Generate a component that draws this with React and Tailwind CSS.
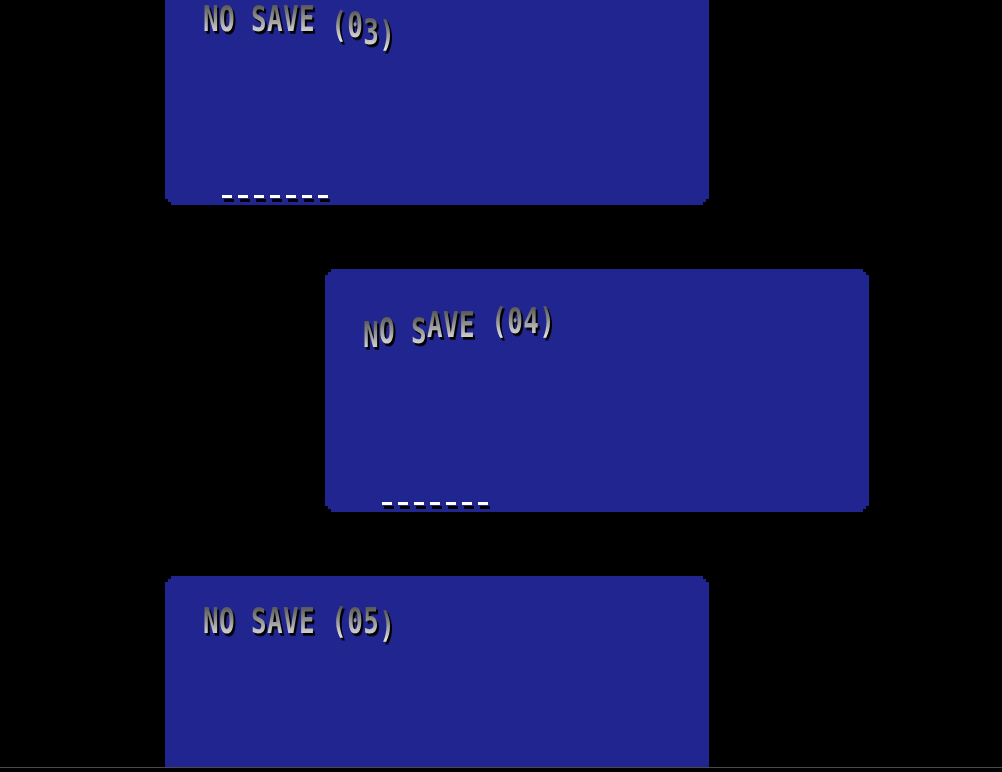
const CORNERS =
  "[clip-path:polygon(6px_0,calc(100%-6px)_0,calc(100%-6px)_3px,calc(100%-3px)_3px,calc(100%-3px)_6px,100%_6px,100%_calc(100%-6px),calc(100%-3px)_calc(100%-6px),calc(100%-3px)_calc(100%-3px),calc(100%-6px)_calc(100%-3px),calc(100%-6px)_100%,6px_100%,6px_calc(100%-3px),3px_calc(100%-3px),3px_calc(100%-6px),0_calc(100%-6px),0_6px,3px_6px,3px_3px,6px_3px)]";

const slots = [
  {
    label: "NO SAVE (03)",
    indent: "ml-[165px]",
    top: "pt-[39px]",
    wave: ["", "", "", "", "", "", "", "", "translate-y-[4px]", "translate-y-[4px]", "translate-y-[9px]", "translate-y-[11px]"],
  },
  {
    label: "NO SAVE (04)",
    indent: "ml-[325px]",
    top: "pt-[34px]",
    wave: ["translate-y-[10px]", "translate-y-[7px]", "", "translate-y-[7px]", "translate-y-[3px]", "translate-y-[3px]", "translate-y-[3px]", "", "", "", "", ""],
  },
  {
    label: "NO SAVE (05)",
    indent: "ml-[165px]",
    top: "pt-[27px]",
    wave: ["", "", "", "", "", "", "", "", "", "", "", "translate-y-[3px]"],
  },
];

function Label({ text, wave }) {
  return (
    <div className="flex origin-top scale-y-[1.35] py-[2px] font-['DejaVu_Sans_Mono',monospace] text-[26px] font-bold leading-none tracking-[0.35px]">
      {text.split("").map((ch, i) => (
        <span
          key={i}
          className={`inline-block bg-gradient-to-b from-[#4a4a4a] to-[#ececec] bg-clip-text text-transparent [filter:drop-shadow(2px_2px_0_#000)] ${wave[i]}`}
        >
          {ch === " " ? "\u00a0" : ch}
        </span>
      ))}
    </div>
  );
}

function SaveSlot({ slot }) {
  return (
    <div
      className={`${slot.indent} ${slot.top} ${CORNERS} flex h-[243px] w-[544px] shrink-0 flex-col justify-between bg-[#212590] pb-[7px]`}
    >
      <div className="-mt-[2px] pl-[38px]">
        <Label text={slot.label} wave={slot.wave} />
      </div>
      <div className="flex gap-[6px] pl-[57px]">
        {Array.from({ length: 7 }).map((_, i) => (
          <div key={i} className="h-[3px] w-[10px] bg-white shadow-[2px_4px_0_#000]" />
        ))}
      </div>
    </div>
  );
}

export default function App() {
  return (
    <div className="flex h-[772px] w-[1002px] flex-col overflow-hidden bg-black">
      <div className="h-[767px] shrink-0 overflow-hidden">
        <div className="-mt-[38px] flex flex-col gap-[64px]">
          {slots.map((s) => (
            <SaveSlot key={s.label} slot={s} />
          ))}
        </div>
      </div>
      <div className="h-px shrink-0 bg-[#4a4a4a]" />
    </div>
  );
}
